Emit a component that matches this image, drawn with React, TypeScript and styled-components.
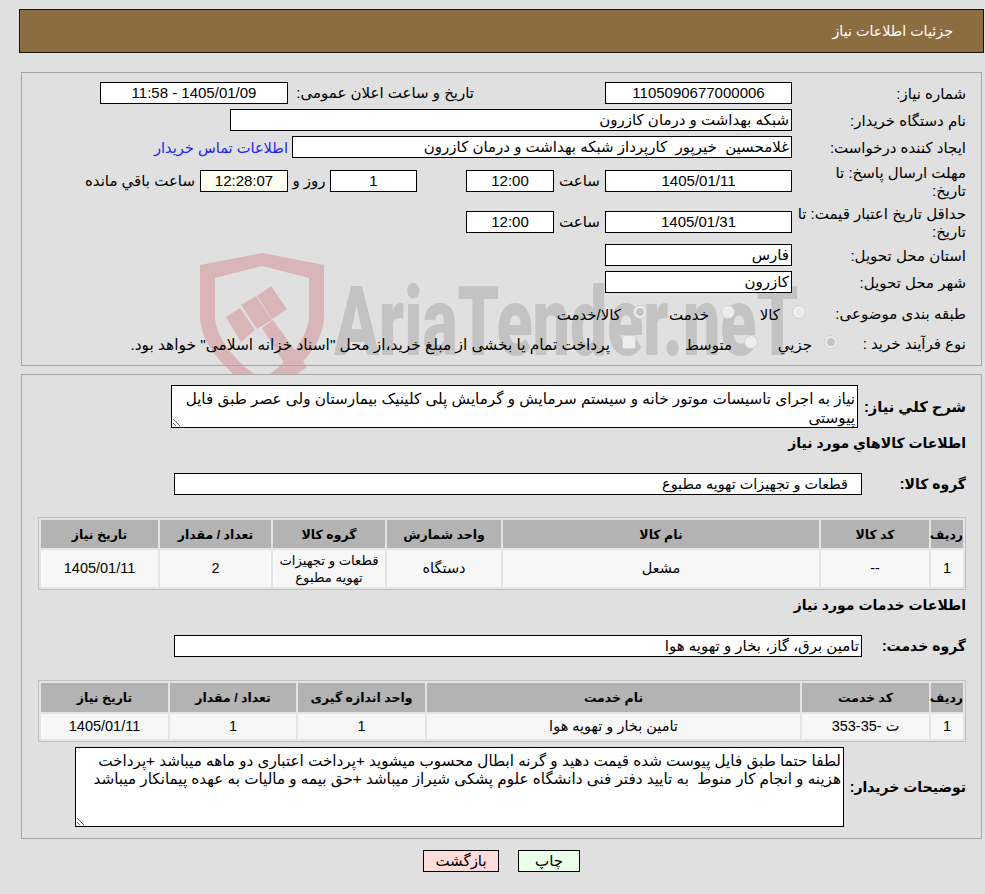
import React from "react";
import styled, { createGlobalStyle } from "styled-components";

const Global = createGlobalStyle`
  html, body { margin: 0; padding: 0; background: #e0e0e0; }
  body { font-family: "Liberation Sans", "DejaVu Sans", sans-serif; font-size: 15px; color: #000; }
  * { box-sizing: border-box; }
`;

const Page = styled.div`
  position: relative;
  direction: rtl;
  width: 985px;
  height: 894px;
  padding: 9px 1px 0 19px;
  overflow: hidden;
`;

const Header = styled.div`
  position: relative;
  z-index: 1;
  height: 44px;
  background: #8c6d42;
  border: 1px solid #1c1408;
  color: #fff;
  font-size: 14.3px;
  line-height: 42px;
  padding-right: 30px;
`;

const Watermark = styled.div`
  position: absolute;
  left: 195px;
  top: 245px;
  width: 620px;
  height: 129px;
  direction: ltr;
  pointer-events: none;
`;

const Shield = styled.svg`
  position: absolute;
  left: 0;
  top: 0;
`;

const Brand = styled.div`
  position: absolute;
  left: 139px;
  top: 27px;
  font-family: "Roboto", "Liberation Sans", sans-serif;
  font-weight: 900;
  font-size: 96px;
  line-height: 100px;
  color: #c3c3c3;
  white-space: nowrap;
  transform: scaleX(0.69);
  transform-origin: left top;
`;

const Panel = styled.section<{ $top: number; $h: number; $fill?: boolean }>`
  position: relative;
  z-index: 1;
  margin: ${(p) => p.$top}px 2px 0 2px;
  height: ${(p) => p.$h}px;
  border: 1px solid #a6a6a6;
  padding: 9px 15px 0 0;
  background: ${(p) => (p.$fill ? "#e0e0e0" : "transparent")};
`;

const Rows = styled.div`
  display: flex;
  flex-direction: column;
  gap: 5px;
`;

const Row = styled.div<{ $h?: number }>`
  display: flex;
  align-items: center;
  height: ${(p) => p.$h ?? 22}px;
`;

const Label = styled.div<{ $w?: number }>`
  flex: none;
  width: ${(p) => p.$w ?? 174}px;
  padding-top: 2px;
  line-height: 18px;
  white-space: nowrap;
`;

const Box = styled.div<{ $w: number; $gap?: number; $tint?: boolean; $align?: string; $pad?: number; $size?: number }>`
  flex: none;
  width: ${(p) => p.$w}px;
  height: 22px;
  margin-right: ${(p) => p.$gap ?? 0}px;
  border: 1px solid #000;
  background: ${(p) => (p.$tint ? "#fffff0" : "#fff")};
  font-size: ${(p) => p.$size ?? 15}px;
  text-align: ${(p) => p.$align ?? "center"};
  line-height: 20px;
  padding: 0 ${(p) => p.$pad ?? 2}px 0 2px;
  white-space: nowrap;
  overflow: hidden;
`;

const Inline = styled.div<{ $w: number; $pad?: number; $center?: boolean }>`
  flex: none;
  width: ${(p) => p.$w}px;
  padding-right: ${(p) => p.$pad ?? 0}px;
  text-align: ${(p) => (p.$center ? "center" : "right")};
  white-space: nowrap;
`;

const ContactLink = styled.a`
  color: #2222ee;
  font-size: 14.6px;
  margin-right: 4px;
  text-decoration: none;
  white-space: nowrap;
`;

const Choice = styled.input`
  appearance: none;
  flex: none;
  width: 14px;
  height: 14px;
  margin: -3px 0 0 0;
  background: #ededed;
  border: 1px solid #d2d2d2;
  border-radius: 50%;
  &:checked { background: radial-gradient(circle, #c4c4c4 0 3.5px, #ededed 4.5px); }
  &[type="checkbox"] { border-radius: 2px; }
`;

const ChoiceText = styled.span<{ $w: number; $size?: number }>`
  flex: none;
  width: ${(p) => p.$w}px;
  padding: 3px 12px 0 0;
  font-size: ${(p) => p.$size ?? 15}px;
  white-space: nowrap;
`;

const BoldLabel = styled.div<{ $w: number; $size?: number }>`
  flex: none;
  width: ${(p) => p.$w}px;
  font-weight: 700;
  font-size: ${(p) => p.$size ?? 14}px;
  white-space: nowrap;
`;

const SectionTitle = styled.h3<{ $top: number }>`
  margin: ${(p) => p.$top}px 0 0 0;
  font-size: 14px;
  font-weight: 700;
  line-height: 20px;
`;

const FieldRow = styled.div<{ $top?: number; $h: number }>`
  display: flex;
  align-items: center;
  margin-top: ${(p) => p.$top ?? 0}px;
  height: ${(p) => p.$h}px;
`;

const Area = styled.textarea<{ $w: number; $h: number; $pt: number; $lh: number }>`
  flex: none;
  display: block;
  width: ${(p) => p.$w}px;
  height: ${(p) => p.$h}px;
  border: 1px solid #000;
  border-radius: 0;
  outline: none;
  background: #fff;
  font: inherit;
  font-size: 15.2px;
  color: #000;
  padding: ${(p) => p.$pt}px 2px 0 2px;
  line-height: ${(p) => p.$lh}px;
  direction: rtl;
  white-space: pre-wrap;
  overflow: hidden;
`;

const Table = styled.table<{ $top: number }>`
  width: 928px;
  margin: ${(p) => p.$top}px 0 0 0;
  table-layout: fixed;
  border-collapse: separate;
  border-spacing: 2px;
  border: 1px solid #c0c0c0;
  background: #e4e4e4;
`;

const Th = styled.th<{ $w: number; $h: number }>`
  width: ${(p) => p.$w}px;
  height: ${(p) => p.$h}px;
  padding: 0;
  background: #b3b3b3;
  font-size: 12.5px;
  font-weight: 700;
  text-align: center;
  white-space: nowrap;
`;

const Td = styled.td<{ $h: number; $dense: boolean }>`
  height: ${(p) => p.$h}px;
  padding: 0;
  background: #f7f7f7;
  font-size: ${(p) => (p.$dense ? 13.2 : 14.5)}px;
  line-height: 17px;
  text-align: center;
`;

const Actions = styled.div`
  display: flex;
  justify-content: center;
  gap: 19px;
  margin-top: 11px;
  direction: ltr;
  position: relative;
  z-index: 1;
`;

const Action = styled.button<{ $bg: string; $w: number }>`
  width: ${(p) => p.$w}px;
  height: 22px;
  padding: 0;
  border: 1px solid #000;
  border-radius: 0;
  background: ${(p) => p.$bg};
  font: inherit;
  color: #000;
`;

const goods = [
  { t: "رديف", w: 32 }, { t: "کد کالا", w: 108 }, { t: "نام کالا", w: 316 }, { t: "واحد شمارش", w: 114 },
  { t: "گروه کالا", w: 112 }, { t: "تعداد / مقدار", w: 111 }, { t: "تاريخ نياز", w: 117 },
];
const goodsRow = ["1", "--", "مشعل", "دستگاه", "قطعات و تجهیزات تهویه مطبوع", "2", "1405/01/11"];
const services = [
  { t: "رديف", w: 32 }, { t: "کد خدمت", w: 127 }, { t: "نام خدمت", w: 373 }, { t: "واحد اندازه گیری", w: 127 },
  { t: "تعداد / مقدار", w: 126 }, { t: "تاريخ نياز", w: 127 },
];
const servicesRow = ["1", "ت -35-353", "تامین بخار و تهویه هوا", "1", "1", "1405/01/11"];

function DataTable(props: { top: number; cols: { t: string; w: number }[]; row: string[]; hh: number; rh: number }) {
  return (
    <Table $top={props.top}>
      <thead>
        <tr>{props.cols.map((c) => <Th key={c.t} $w={c.w} $h={props.hh}>{c.t}</Th>)}</tr>
      </thead>
      <tbody>
        <tr>{props.row.map((v, i) => <Td key={i} $h={props.rh} $dense={v.length > 24}>{v}</Td>)}</tr>
      </tbody>
    </Table>
  );
}

export default function App() {
  return (
    <Page>
      <Global />
      <Watermark aria-hidden="true">
        <Shield width="140" height="129" viewBox="0 0 140 129">
          <path d="M5 20 L67 8 L129 20 V70 C129 95 113 112 96 129 L67 150 L38 129 C21 112 5 95 5 70 Z M20 33 V70 C20 90 35 108 50 122 L67 135 L84 122 C99 108 114 90 114 70 V33 L67 21 Z" fill="#d9b5b7" fillRule="evenodd" />
          <path d="M31 72 L45 63 L60 85 L46 97 Z M46 60 L61 51 L77 75 L62 84 Z M62 51 L76 41 L92 64 L77 74 Z" fill="#d9b5b7" />
          <path d="M67 83 L78 75 L112 122 L98 132 Z" fill="#d9b5b7" />
        </Shield>
        <Brand>AriaTender.neT</Brand>
      </Watermark>

      <Header>جزئیات اطلاعات نیاز</Header>

      <Panel $top={19} $h={294}>
        <Rows>
          <Row>
            <Label>شماره نیاز:</Label>
            <Box $w={187}>1105090677000006</Box>
            <Inline $w={317} $pad={131}>تاریخ و ساعت اعلان عمومی:</Inline>
            <Box $w={188}>1405/01/09 - 11:58</Box>
          </Row>
          <Row>
            <Label>نام دستگاه خریدار:</Label>
            <Box $w={562} $align="right">شبکه بهداشت و درمان کازرون</Box>
          </Row>
          <Row>
            <Label>ایجاد کننده درخواست:</Label>
            <Box $w={500} $align="right">غلامحسین&nbsp; خیرپور&nbsp; کارپرداز شبکه بهداشت و درمان کازرون</Box>
            <ContactLink href="#">اطلاعات تماس خریدار</ContactLink>
          </Row>
          <Row $h={36}>
            <Label>مهلت ارسال پاسخ: تا<br />تاریخ:</Label>
            <Box $w={187}>1405/01/11</Box>
            <Inline $w={51} $center>ساعت</Inline>
            <Box $w={88}>12:00</Box>
            <Box $w={87} $gap={49}>1</Box>
            <Inline $w={42} $center>روز و</Inline>
            <Box $w={88} $tint>12:28:07</Box>
            <Inline $w={117} $pad={5}>ساعت باقي مانده</Inline>
          </Row>
          <Row $h={35}>
            <Label>حداقل تاریخ اعتبار قیمت: تا<br />تاریخ:</Label>
            <Box $w={187}>1405/01/31</Box>
            <Inline $w={51} $center>ساعت</Inline>
            <Box $w={88}>12:00</Box>
          </Row>
          <Row>
            <Label>استان محل تحویل:</Label>
            <Box $w={187} $align="right">فارس</Box>
          </Row>
          <Row>
            <Label>شهر محل تحویل:</Label>
            <Box $w={187} $align="right">کازرون</Box>
          </Row>
          <Row $h={30}>
            <Label $w={160}>طبقه بندی موضوعی:</Label>
            <Choice type="radio" disabled name="kind" />
            <ChoiceText $w={57}>کالا</ChoiceText>
            <Choice type="radio" disabled name="kind" />
            <ChoiceText $w={74}>خدمت</ChoiceText>
            <Choice type="radio" disabled defaultChecked name="kind" />
            <ChoiceText $w={90}>کالا/خدمت</ChoiceText>
          </Row>
          <Row $h={20}>
            <Label $w={128}>نوع فرآیند خرید :</Label>
            <Choice type="radio" disabled defaultChecked name="proc" />
            <ChoiceText $w={66}>جزیي</ChoiceText>
            <Choice type="radio" disabled name="proc" />
            <ChoiceText $w={108}>متوسط</ChoiceText>
            <Choice type="checkbox" disabled />
            <ChoiceText $w={492} $size={15.4}>پرداخت تمام یا بخشی از مبلغ خرید،از محل "اسناد خزانه اسلامی" خواهد بود.</ChoiceText>
          </Row>
        </Rows>
      </Panel>

      <Panel $top={8} $h={465} $fill>
        <FieldRow $top={1} $h={43}>
          <BoldLabel $w={108} $size={14.7}>شرح کلي نياز:</BoldLabel>
          <Area $w={687} $h={43} $pt={3} $lh={19} readOnly defaultValue="نیاز به اجرای تاسیسات موتور خانه و سیستم سرمایش و گرمایش پلی کلینیک بیمارستان ولی عصر طبق فایل پیوستی" />
        </FieldRow>
        <SectionTitle $top={5}>اطلاعات كالاهاي مورد نياز</SectionTitle>
        <FieldRow $top={20} $h={22}>
          <BoldLabel $w={104}>گروه کالا:</BoldLabel>
          <Box $w={688} $align="right" $pad={13} $size={14.4}>قطعات و تجهیزات تهویه مطبوع</Box>
        </FieldRow>
        <DataTable top={22} cols={goods} row={goodsRow} hh={28} rh={37} />
        <SectionTitle $top={5}>اطلاعات خدمات مورد نياز</SectionTitle>
        <FieldRow $top={20} $h={22}>
          <BoldLabel $w={104}>گروه خدمت:</BoldLabel>
          <Box $w={688} $align="right">تامین برق، گاز، بخار و تهویه هوا</Box>
        </FieldRow>
        <DataTable top={23} cols={services} row={servicesRow} hh={29} rh={25} />
        <FieldRow $top={5} $h={80}>
          <BoldLabel $w={122}>توضیحات خریدار:</BoldLabel>
          <Area $w={769} $h={80} $pt={4} $lh={18} readOnly defaultValue={"لطفا حتما طبق فایل پیوست شده قیمت دهید و گرنه ابطال محسوب میشوید +پرداخت اعتباری دو ماهه میباشد +پرداخت\nهزینه و انجام کار منوط  به تایید دفتر فنی دانشگاه علوم پشکی شیراز میباشد +حق بیمه و مالیات به عهده پیمانکار میباشد"} />
        </FieldRow>
      </Panel>

      <Actions>
        <Action $bg="#ffdcdc" $w={76}>بازگشت</Action>
        <Action $bg="#e9ffe9" $w={62}>چاپ</Action>
      </Actions>
    </Page>
  );
}
